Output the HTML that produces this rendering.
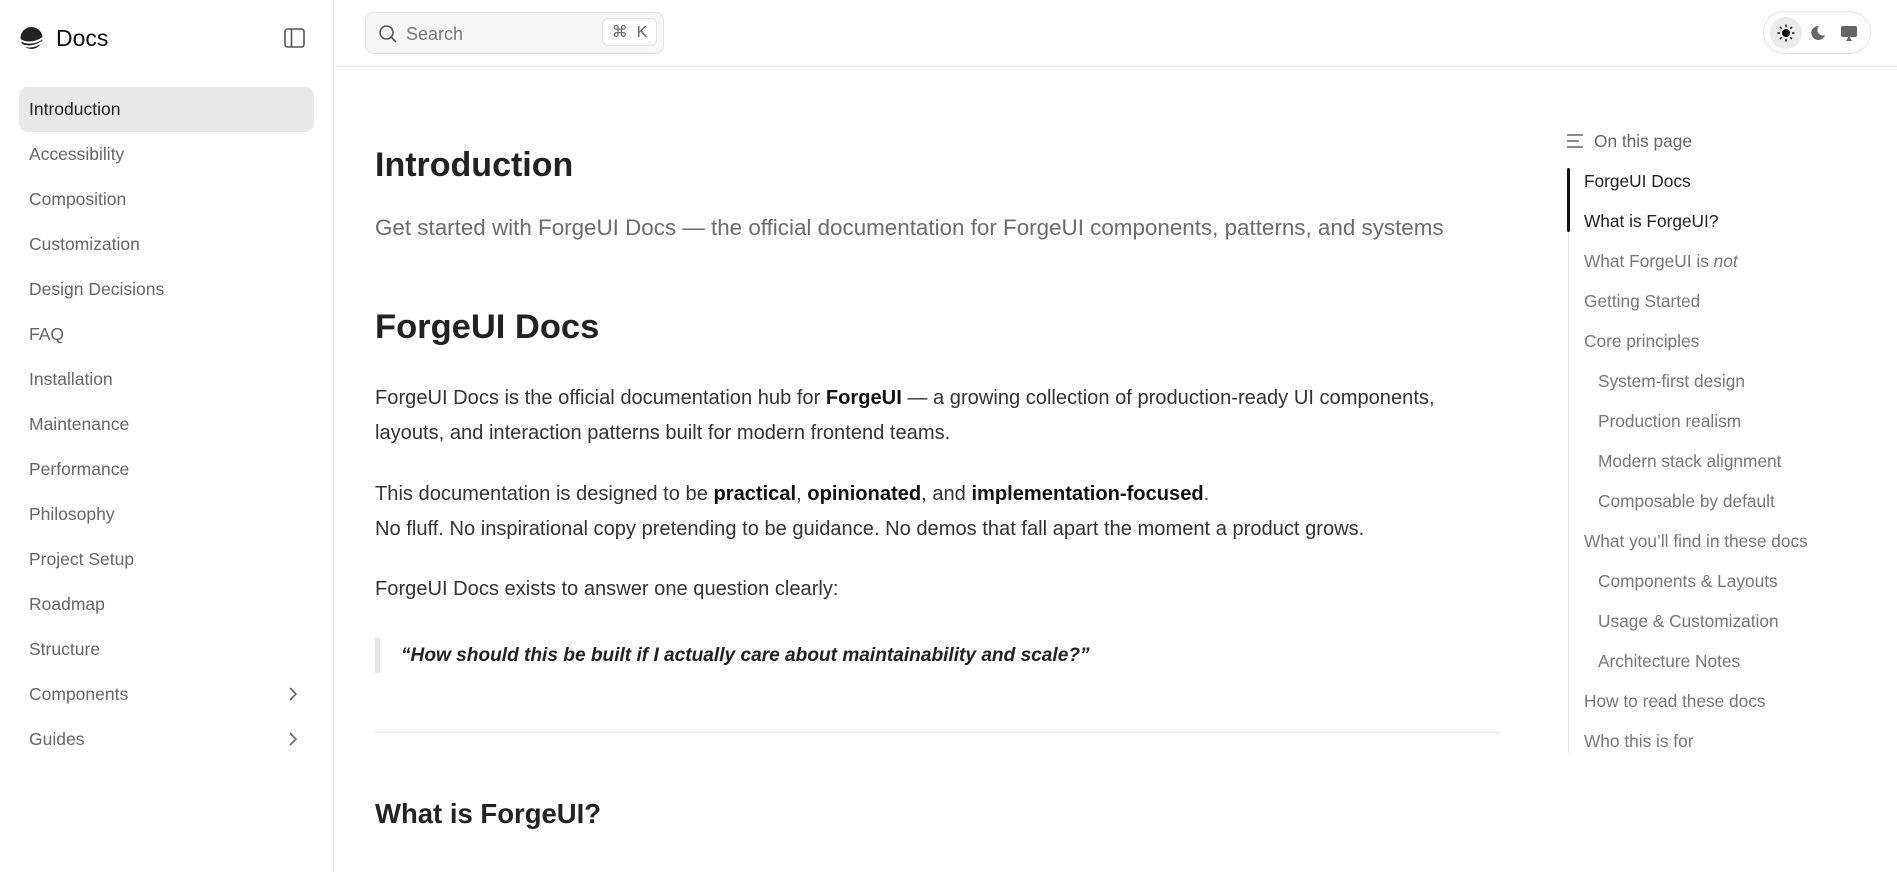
<!DOCTYPE html>
<html><head><meta charset="utf-8"><style>
*{box-sizing:border-box;margin:0;padding:0}
body{width:1897px;height:872px;overflow:hidden;background:#fff;font-family:"Liberation Sans",sans-serif;color:#2b2b2b;position:relative}
.side{position:absolute;left:0;top:0;width:334px;height:872px;border-right:1px solid #e6e6e6}
.logo{position:absolute;left:19px;top:25px;display:flex;align-items:center}
.logo span{font-size:23px;color:#111;margin-left:12px}
.nav{position:absolute;left:19px;top:87px;width:295px}
.nav div{height:45px;line-height:45px;padding-left:10px;font-size:17.5px;color:#666;position:relative}
.nav .act{background:#e8e8e8;border-radius:9px;color:#222}
.nav .ch{position:absolute;right:16px;top:0;color:#777}
.hdr{position:absolute;left:335px;top:0;right:0;height:67px;border-bottom:1px solid #e6e6e6}
.search{position:absolute;left:365px;top:12px;width:299px;height:42px;background:#f7f7f7;border:1px solid #e3e3e3;border-radius:9px}
.search .t{position:absolute;left:40px;top:11px;font-size:18px;color:#777}
.kbd{position:absolute;left:236px;top:5px;width:55px;height:28px;background:#fff;border:1px solid #e3e3e3;border-radius:6px;font-size:16px;color:#666;text-align:center;line-height:27px}
.theme{position:absolute;left:1763px;top:11px;width:108px;height:43px;border:1px solid #e3e3e3;border-radius:22px}
.main{position:absolute;left:375px;top:0;width:1126px}
h1{position:absolute;top:146px;font-size:34px;font-weight:600;color:#222;white-space:nowrap}
.sub{position:absolute;top:215px;font-size:22.4px;color:#6b6b6b;white-space:nowrap}
h2{position:absolute;top:308px;font-size:34.5px;font-weight:600;color:#222}
p{position:absolute;font-size:20.1px;line-height:35px;color:#333;white-space:nowrap}
p b{color:#111}
.bq{position:absolute;top:638px;left:0;height:35px;border-left:5px solid #e6e6e6;padding-left:21px;font-size:19.1px;font-style:italic;font-weight:bold;line-height:35px;color:#222;white-space:nowrap}
hr{position:absolute;top:732px;left:0;width:1125px;border:0;border-top:1px solid #e3e3e3}
h3{position:absolute;top:798px;font-size:27.5px;font-weight:600;color:#222}
.tl{position:absolute;left:1568px;top:168px;height:585px;border-left:1px solid #e6e6e6}
.ta{position:absolute;left:1567px;top:168px;height:64px;border-left:3px solid #111;border-radius:2px}
.ti{position:absolute;left:1584px;font-size:17.3px;color:#777;white-space:nowrap}
.ti.n{left:1598px}
.ti.a{color:#222}
</style></head><body>
<div class="side">
 <div class="logo"><svg width="25" height="24" viewBox="0 0 25 24"><circle cx="12.5" cy="11" r="11" fill="#222"/><path d="M1 13 Q12 19 24 11" stroke="#fff" stroke-width="2" fill="none"/><path d="M3 18 Q13 22 23 15" stroke="#fff" stroke-width="2" fill="none"/></svg><span>Docs</span></div>
 <svg style="position:absolute;left:284px;top:28px" width="21" height="20" viewBox="0 0 21 20"><rect x="1" y="1" width="19" height="18" rx="2.5" fill="none" stroke="#555" stroke-width="1.6"/><line x1="7.5" y1="1" x2="7.5" y2="19" stroke="#555" stroke-width="1.6"/></svg>
 <div class="nav">
  <div class="act">Introduction</div><div>Accessibility</div><div>Composition</div><div>Customization</div><div>Design Decisions</div><div>FAQ</div><div>Installation</div><div>Maintenance</div><div>Performance</div><div>Philosophy</div><div>Project Setup</div><div>Roadmap</div><div>Structure</div>
  <div>Components<svg class="ch" style="top:15px" width="10" height="14" viewBox="0 0 10 14"><path d="M2 1l6 6-6 6" stroke="#666" stroke-width="1.6" fill="none"/></svg></div>
  <div>Guides<svg class="ch" style="top:15px" width="10" height="14" viewBox="0 0 10 14"><path d="M2 1l6 6-6 6" stroke="#666" stroke-width="1.6" fill="none"/></svg></div>
 </div>
</div>
<div class="hdr"></div>
<div class="search"><svg style="position:absolute;left:12px;top:11px" width="20" height="20" viewBox="0 0 20 20"><circle cx="8.5" cy="8.5" r="6.5" fill="none" stroke="#555" stroke-width="1.6"/><line x1="13.5" y1="13.5" x2="18" y2="18" stroke="#555" stroke-width="1.6"/></svg><span class="t">Search</span><div class="kbd">⌘&nbsp; K</div></div>
<div class="theme">
 <div style="position:absolute;left:6px;top:5px;width:32px;height:32px;border-radius:16px;background:#ebebeb"></div>
 <svg style="position:absolute;left:13px;top:12px" width="18" height="18" viewBox="0 0 18 18"><circle cx="9" cy="9" r="4" fill="#111"/><g stroke="#111" stroke-width="1.5"><line x1="9" y1="0.5" x2="9" y2="3"/><line x1="9" y1="15" x2="9" y2="17.5"/><line x1="0.5" y1="9" x2="3" y2="9"/><line x1="15" y1="9" x2="17.5" y2="9"/><line x1="3" y1="3" x2="4.7" y2="4.7"/><line x1="13.3" y1="13.3" x2="15" y2="15"/><line x1="3" y1="15" x2="4.7" y2="13.3"/><line x1="13.3" y1="4.7" x2="15" y2="3"/></g></svg>
 <svg style="position:absolute;left:46px;top:13px" width="16" height="16" viewBox="0 0 16 16"><path d="M9 1A7 7 0 1 0 15 10 5.5 5.5 0 0 1 9 1z" fill="#666"/></svg>
 <svg style="position:absolute;left:76px;top:13px" width="18" height="17" viewBox="0 0 18 17"><rect x="1" y="1" width="16" height="11" rx="2" fill="#666"/><path d="M6 16l3-5 3 5z" fill="#666"/></svg>
</div>
<div class="main">
 <h1>Introduction</h1>
 <div class="sub">Get started with ForgeUI Docs — the official documentation for ForgeUI components, patterns, and systems</div>
 <h2>ForgeUI Docs</h2>
 <p style="top:381px">ForgeUI Docs is the official documentation hub for <b>ForgeUI</b> — a growing collection of production-ready UI components,<br>layouts, and interaction patterns built for modern frontend teams.</p>
 <p style="top:477px">This documentation is designed to be <b>practical</b>, <b>opinionated</b>, and <b>implementation-focused</b>.<br>No fluff. No inspirational copy pretending to be guidance. No demos that fall apart the moment a product grows.</p>
 <p style="top:572px">ForgeUI Docs exists to answer one question clearly:</p>
 <div class="bq">“How should this be built if I actually care about maintainability and scale?”</div>
 <hr>
 <h3>What is ForgeUI?</h3>
</div>
<svg style="position:absolute;left:1567px;top:134px" width="16" height="14" viewBox="0 0 16 14"><g stroke="#666" stroke-width="1.5"><line x1="0" y1="1" x2="16" y2="1"/><line x1="0" y1="7" x2="12" y2="7"/><line x1="0" y1="13" x2="16" y2="13"/></g></svg>
<div class="ti" style="left:1594px;top:131px;color:#666">On this page</div>
<div class="tl"></div><div class="ta"></div>
<div class="ti a" style="top:171px">ForgeUI Docs</div>
<div class="ti a" style="top:211px">What is ForgeUI?</div>
<div class="ti" style="top:251px">What ForgeUI is <i>not</i></div>
<div class="ti" style="top:291px">Getting Started</div>
<div class="ti" style="top:331px">Core principles</div>
<div class="ti n" style="top:371px">System-first design</div>
<div class="ti n" style="top:411px">Production realism</div>
<div class="ti n" style="top:451px">Modern stack alignment</div>
<div class="ti n" style="top:491px">Composable by default</div>
<div class="ti" style="top:531px">What you’ll find in these docs</div>
<div class="ti n" style="top:571px">Components &amp; Layouts</div>
<div class="ti n" style="top:611px">Usage &amp; Customization</div>
<div class="ti n" style="top:651px">Architecture Notes</div>
<div class="ti" style="top:691px">How to read these docs</div>
<div class="ti" style="top:731px">Who this is for</div>
</body></html>
